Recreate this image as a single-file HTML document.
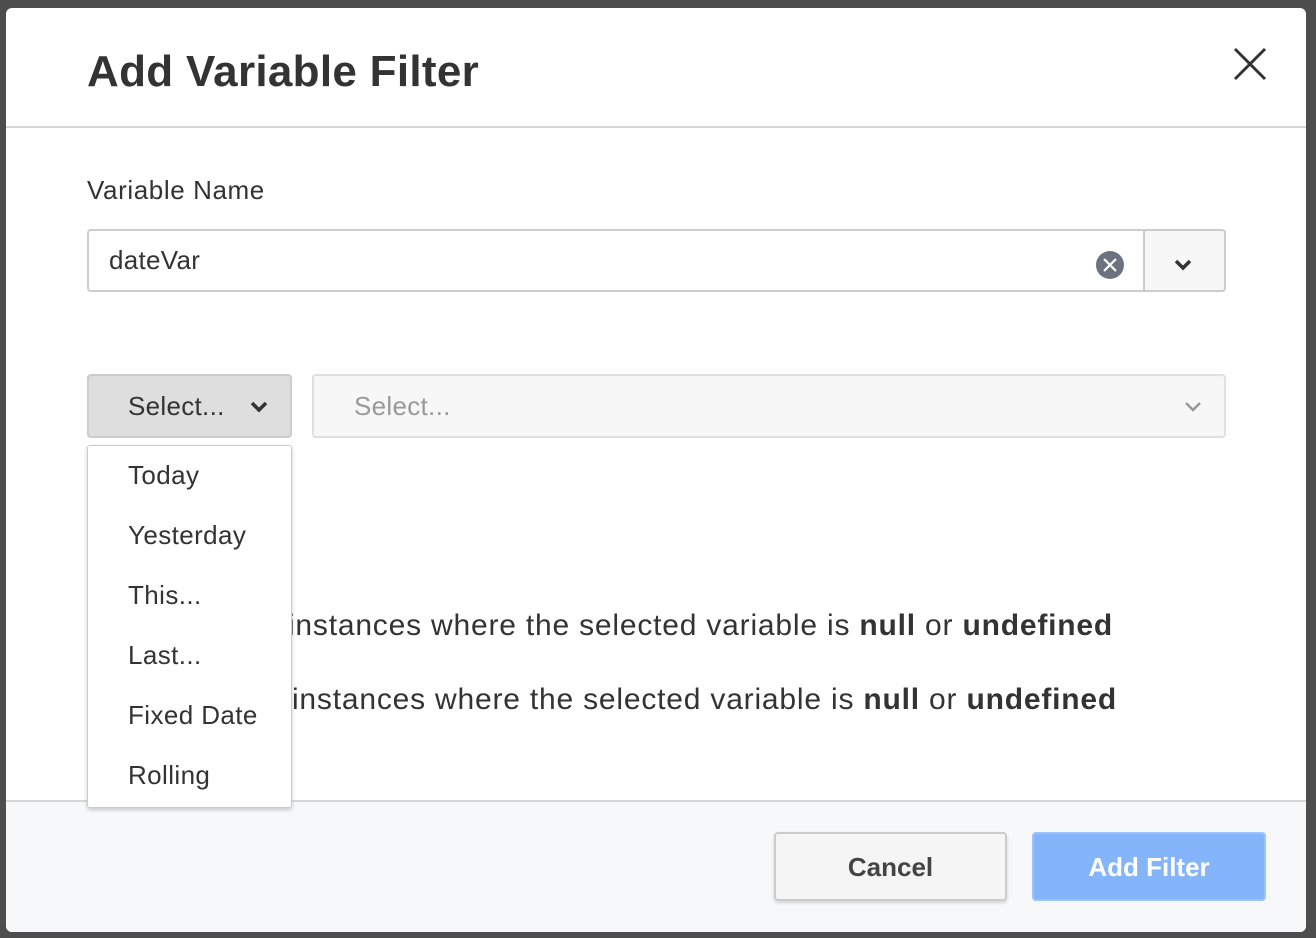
<!DOCTYPE html>
<html><head><style>
*{box-sizing:border-box;margin:0;padding:0}
body{width:1316px;height:938px;background:#4d4d4d;font-family:"Liberation Sans",sans-serif;color:#333;position:relative;overflow:hidden}
.a{position:absolute}
.modal{left:6px;top:8px;width:1300px;height:924px;background:#fff;border-radius:6px;overflow:hidden}
</style></head><body>
<div class="a modal">
  <div class="a" style="left:81px;top:39px;font-size:44px;font-weight:bold;color:#333;letter-spacing:0.3px">Add Variable Filter</div>
  <svg class="a" style="left:1226px;top:38px" width="36" height="36" viewBox="0 0 36 36"><path d="M3 3L33 33M33 3L3 33" stroke="#333" stroke-width="3"/></svg>
  <div class="a" style="left:0;top:118px;width:1300px;height:2px;background:#d8d8d8"></div>
  <div class="a" style="left:81px;top:167px;font-size:26px;color:#333;letter-spacing:0.6px">Variable Name</div>
  <div class="a" style="left:81px;top:221px;width:1139px;height:63px;border:2px solid #ccc;border-radius:4px;background:#fff"></div>
  <div class="a" style="left:1137px;top:221px;width:83px;height:63px;border:2px solid #ccc;border-radius:0 4px 4px 0;background:#f7f7f7"></div>
  <div class="a" style="left:103px;top:237px;font-size:26px;color:#333;letter-spacing:0.3px">dateVar</div>
  <svg class="a" style="left:1090px;top:243px" width="28" height="28" viewBox="0 0 28 28"><circle cx="14" cy="14" r="14" fill="#6b7280"/><path d="M8 8L20 20M20 8L8 20" stroke="#fff" stroke-width="2.2"/></svg>
  <svg class="a" style="left:1167px;top:249px" width="20" height="14" viewBox="0 0 20 14"><path d="M3 4L10 11L17 4" stroke="#333" stroke-width="3.5" fill="none"/></svg>

  <div class="a" style="left:81px;top:366px;width:205px;height:64px;background:#dedede;border:2px solid #ccc;border-radius:4px"></div>
  <div class="a" style="left:122px;top:383px;font-size:26px;color:#333;letter-spacing:0.3px">Select...</div>
  <svg class="a" style="left:243px;top:391px" width="20" height="14" viewBox="0 0 20 14"><path d="M3 4L10 11L17 4" stroke="#333" stroke-width="3.5" fill="none"/></svg>
  <div class="a" style="left:306px;top:366px;width:914px;height:64px;background:#f7f7f7;border:2px solid #e0e0e0;border-radius:4px"></div>
  <div class="a" style="left:348px;top:383px;font-size:26px;color:#999;letter-spacing:0.3px">Select...</div>
  <svg class="a" style="left:1177px;top:391px" width="20" height="14" viewBox="0 0 20 14"><path d="M3 4L10 11L17 4" stroke="#999" stroke-width="2.5" fill="none"/></svg>

  <div class="a" style="right:193px;top:601px;font-size:30px;color:#333;white-space:nowrap;letter-spacing:0.8px">Include instances where the selected variable is <b>null</b> or <b>undefined</b></div>
  <div class="a" style="right:189px;top:675px;font-size:30px;color:#333;white-space:nowrap;letter-spacing:0.8px">Exclude instances where the selected variable is <b>null</b> or <b>undefined</b></div>

  <div class="a" style="left:0;top:792px;width:1300px;height:132px;background:#f7f8fa;border-top:2px solid #d8d8d8"></div>
  <div class="a" style="left:768px;top:824px;width:233px;height:69px;background:#f5f5f5;border:2px solid #ccc;border-radius:4px;box-shadow:0 2px 3px rgba(0,0,0,.15);font-size:26px;font-weight:bold;color:#444;text-align:center;line-height:67px">Cancel</div>
  <div class="a" style="left:1026px;top:824px;width:234px;height:69px;background:#84b5fb;border:2px solid #9cc4fc;border-radius:4px;font-size:26px;font-weight:bold;color:#fff;text-align:center;line-height:67px">Add Filter</div>

  <div class="a" style="left:81px;top:437px;width:205px;height:363px;background:#fff;border:1px solid #ccc;border-radius:3px;box-shadow:0 2px 4px rgba(0,0,0,.2)"></div>
  <div class="a" style="left:122px;top:437px;font-size:26px;line-height:60px;color:#333;letter-spacing:0.4px">Today<br>Yesterday<br>This...<br>Last...<br>Fixed Date<br>Rolling</div>
</div>
</body></html>
